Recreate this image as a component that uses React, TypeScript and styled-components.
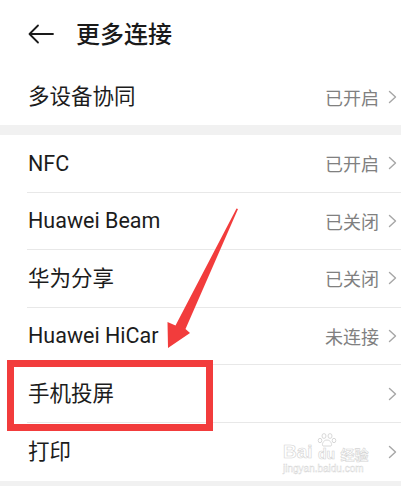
import React from "react";
import styled, { createGlobalStyle } from "styled-components";

const Global = createGlobalStyle`
  html, body { margin: 0; padding: 0; background: #ffffff; }
  body { font-family: Roboto, "Noto Sans CJK SC", sans-serif; }
`;

const Page = styled.div`
  position: relative;
  width: 401px;
  height: 486px;
  overflow: hidden;
  background: #ffffff;
  display: flex;
  flex-direction: column;
`;

const Header = styled.header`
  height: 68px;
  display: flex;
  align-items: center;
  padding-left: 28px;
  gap: 22px;
  flex-shrink: 0;
`;

const Title = styled.h1`
  margin: 0;
  font-size: 24px;
  font-weight: 500;
  color: #1a1a1a;
  font-family: "Noto Sans CJK SC", sans-serif;
  line-height: 1;
  position: relative;
  top: -1px;
`;

const Band = styled.div<{ $h: number }>`
  height: ${(p) => p.$h}px;
  background: #f1f1f1;
  flex-shrink: 0;
`;

const Group = styled.section`
  display: flex;
  flex-direction: column;
  flex-shrink: 0;
`;

const Row = styled.div<{ $h: number; $divider: boolean }>`
  box-sizing: border-box;
  height: ${(p) => p.$h}px;
  margin-left: 27px;
  padding-left: 1px;
  padding-right: 4px;
  display: flex;
  align-items: center;
  border-bottom: ${(p) => (p.$divider ? "1px solid #e8e8e8" : "none")};
`;

const Label = styled.span`
  flex: 1;
  font-size: 21.5px;
  font-weight: 400;
  color: #1c1c1c;
  font-family: Roboto, "Noto Sans CJK SC", sans-serif;
  line-height: 1;
`;

const Value = styled.span`
  font-size: 18px;
  color: #808080;
  font-family: "Noto Sans CJK SC", sans-serif;
  line-height: 1;
  margin-right: 9px;
`;

const Rest = styled.div`
  flex: 1;
  background: #f1f1f1;
`;

const RedBox = styled.div`
  position: absolute;
  left: 7px;
  top: 360px;
  width: 206px;
  height: 71px;
  box-sizing: border-box;
  border: 7px solid #f23c3c;
`;

const ArrowLayer = styled.svg`
  position: absolute;
  left: 0;
  top: 0;
  pointer-events: none;
`;

const Watermark = styled.div`
  position: absolute;
  left: 283px;
  top: 431px;
  display: flex;
  flex-direction: column;
  align-items: flex-start;
  color: #ffffff;
  -webkit-text-stroke: 0.6px #d4d4d4;
  pointer-events: none;
`;

const WmTop = styled.div`
  display: flex;
  align-items: flex-end;
  font-family: "Liberation Sans", sans-serif;
  font-weight: 700;
  font-size: 19px;
  line-height: 1;
  height: 30px;
`;

const WmDu = styled.span`
  display: flex;
  flex-direction: column;
  align-items: center;
  margin-left: 4px;
  font-size: 14px;
`;

const WmCn = styled.span`
  font-family: "Noto Sans CJK SC", sans-serif;
  font-size: 14px;
  margin-left: 4px;
`;

const WmUrl = styled.div`
  font-family: "Liberation Sans", sans-serif;
  font-size: 10px;
  line-height: 1;
  margin-top: 3px;
  -webkit-text-stroke: 0.4px #d4d4d4;
`;

const BackIcon = () => (
  <svg width="26" height="20" viewBox="0 0 26 20">
    <path
      d="M25 10 H2 M10 1.5 L1.5 10 L10 18.5"
      fill="none"
      stroke="#1a1a1a"
      strokeWidth="1.8"
      strokeLinecap="round"
      strokeLinejoin="round"
    />
  </svg>
);

const Chevron = () => (
  <svg width="9" height="14" viewBox="0 0 9 14">
    <path
      d="M1.5 1.5 L7.5 7 L1.5 12.5"
      fill="none"
      stroke="#a6a6a6"
      strokeWidth="1.4"
      strokeLinecap="round"
      strokeLinejoin="round"
    />
  </svg>
);

const Paw = () => (
  <svg width="20" height="14" viewBox="0 0 20 14">
    <g fill="none" stroke="#d4d4d4" strokeWidth="0.9">
      <ellipse cx="7" cy="3" rx="2" ry="2.4" />
      <ellipse cx="13" cy="3" rx="2" ry="2.4" />
      <ellipse cx="3" cy="7.5" rx="1.8" ry="2.2" />
      <ellipse cx="17" cy="7.5" rx="1.8" ry="2.2" />
      <path d="M10 7 C6 7 4.5 12 6 13 H14 C15.5 12 14 7 10 7 Z" />
    </g>
  </svg>
);

type Item = { label: string; value?: string };

const items: Item[] = [
  { label: "NFC", value: "已开启" },
  { label: "Huawei Beam", value: "已关闭" },
  { label: "华为分享", value: "已关闭" },
  { label: "Huawei HiCar", value: "未连接" },
  { label: "手机投屏" },
  { label: "打印" },
];

export default function App() {
  return (
    <>
      <Global />
      <Page>
        <Header>
          <BackIcon />
          <Title>更多连接</Title>
        </Header>
        <Group>
          <Row $h={57} $divider={false}>
            <Label>多设备协同</Label>
            <Value>已开启</Value>
            <Chevron />
          </Row>
        </Group>
        <Band $h={10} />
        <Group>
          {items.map((it, i) => (
            <Row key={it.label} $h={57.6} $divider={i < items.length - 1}>
              <Label>{it.label}</Label>
              {it.value && <Value>{it.value}</Value>}
              <Chevron />
            </Row>
          ))}
        </Group>
        <Rest />
        <Watermark>
          <WmTop>
            <span>Bai</span>
            <WmDu>
              <Paw />
              <span>du</span>
            </WmDu>
            <WmCn>经验</WmCn>
          </WmTop>
          <WmUrl>jingyan.baidu.com</WmUrl>
        </Watermark>
        <RedBox />
        <ArrowLayer width="401" height="486" viewBox="0 0 401 486">
          <polygon
            points="238,209 185.5,329 190,333 168,348 167.5,322 175.5,325.5 236.5,208.5"
            fill="#f23c3c"
          />
        </ArrowLayer>
      </Page>
    </>
  );
}
